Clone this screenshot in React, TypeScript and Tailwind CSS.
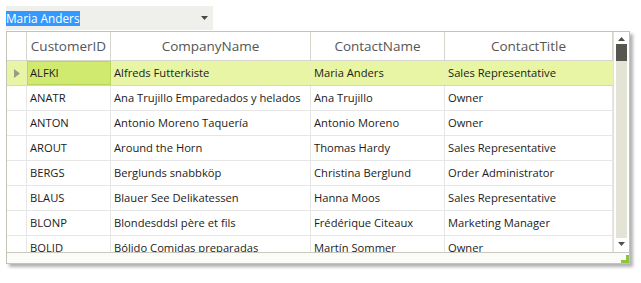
import React from 'react';

type Customer = {
    id: string;
    company: string;
    contact: string;
    title: string;
};

const customers: Customer[] = [
    { id: 'ALFKI', company: 'Alfreds Futterkiste', contact: 'Maria Anders', title: 'Sales Representative' },
    { id: 'ANATR', company: 'Ana Trujillo Emparedados y helados', contact: 'Ana Trujillo', title: 'Owner' },
    { id: 'ANTON', company: 'Antonio Moreno Taquería', contact: 'Antonio Moreno', title: 'Owner' },
    { id: 'AROUT', company: 'Around the Horn', contact: 'Thomas Hardy', title: 'Sales Representative' },
    { id: 'BERGS', company: 'Berglunds snabbköp', contact: 'Christina Berglund', title: 'Order Administrator' },
    { id: 'BLAUS', company: 'Blauer See Delikatessen', contact: 'Hanna Moos', title: 'Sales Representative' },
    { id: 'BLONP', company: 'Blondesddsl père et fils', contact: 'Frédérique Citeaux', title: 'Marketing Manager' },
    { id: 'BOLID', company: 'Bólido Comidas preparadas', contact: 'Martín Sommer', title: 'Owner' },
];

const font = "font-['Segoe_UI','Open_Sans','Noto_Sans',sans-serif]";

function HeaderCell({ children, className }: { children?: React.ReactNode; className: string }) {
    return (
        <div
            className={`flex h-full shrink-0 items-center justify-center border-r border-[#d6d6cc] text-[13.5px] text-[#555555] ${className}`}
        >
            {children}
        </div>
    );
}

function Row({ c, selected }: { c: Customer; selected: boolean }) {
    const cell = 'flex h-full shrink-0 items-center overflow-hidden whitespace-nowrap border-r px-[3px]';
    const line = selected ? 'border-[#e8f0b8]' : 'border-[#e6e6e6]';
    return (
        <div
            className={`flex h-[25px] shrink-0 border-b text-[11.2px] text-[#1c1c1c] ${
                selected ? 'border-[#d2e86c] bg-[#e7f5a4]' : 'border-[#e6e6e6] bg-white'
            }`}
        >
            <div className={`flex h-full w-[20px] shrink-0 items-center justify-center border-r ${line}`}>
                {selected && (
                    <svg width="6" height="9" viewBox="0 0 6 9">
                        <path d="M0 0 L6 4.5 L0 9 Z" fill="#9a9a8c" />
                    </svg>
                )}
            </div>
            <div
                className={`${cell} w-[84px] ${
                    selected ? 'border-[#b7d64a] bg-[#d0ea70] outline outline-1 -outline-offset-1 outline-[#b9d85a]' : line
                }`}
            >
                {c.id}
            </div>
            <div className={`${cell} w-[200px] ${line}`}>{c.company}</div>
            <div className={`${cell} w-[134px] ${line}`}>{c.contact}</div>
            <div className={`${cell} w-[168px] ${line}`}>{c.title}</div>
        </div>
    );
}

export default function App() {
    return (
        <div className={`h-[283px] w-[641px] overflow-hidden bg-white ${font}`}>
            {/* Combo */}
            <div className="ml-[6px] mt-[6px] flex h-[24px] w-[207px] items-center justify-between bg-[#efefeb] pr-[5px]">
                <span className="bg-[#3399ff] text-[11.8px] leading-[15px] text-white">Maria Anders</span>
                <svg width="7" height="4" viewBox="0 0 7 4">
                    <path d="M0 0 H7 L3.5 4 Z" fill="#4a4a44" />
                </svg>
            </div>

            {/* Grid */}
            <div className="ml-[6px] mt-px flex h-[233px] w-[624px] flex-col border border-[#c4c4b6] shadow-[3px_3px_3px_rgba(0,0,0,0.3)]">
                <div className="flex min-h-0 flex-1">
                    <div className="flex min-w-0 flex-1 flex-col overflow-hidden">
                        <div className="flex h-[29px] shrink-0 border-b border-[#d6d6cc]">
                            <HeaderCell className="w-[20px]" />
                            <HeaderCell className="w-[84px]">CustomerID</HeaderCell>
                            <HeaderCell className="w-[200px]">CompanyName</HeaderCell>
                            <HeaderCell className="w-[134px]">ContactName</HeaderCell>
                            <HeaderCell className="w-[168px]">ContactTitle</HeaderCell>
                        </div>
                        {customers.map((c, i) => (
                            <Row key={c.id} c={c} selected={i === 0} />
                        ))}
                    </div>

                    {/* Vertical scrollbar */}
                    <div className="flex w-[16px] shrink-0 flex-col items-center border-l border-[#e0e0d8] bg-white py-[2px]">
                        <div className="flex h-[9px] items-center">
                            <svg width="7" height="4" viewBox="0 0 7 4">
                                <path d="M0 4 H7 L3.5 0 Z" fill="#505048" />
                            </svg>
                        </div>
                        <div className="mt-[1px] flex w-[11px] flex-1 flex-col bg-[#e3e3d6]">
                            <div className="h-[17px] bg-[#57574f]" />
                        </div>
                        <div className="flex h-[12px] items-center">
                            <svg width="7" height="4" viewBox="0 0 7 4">
                                <path d="M0 0 H7 L3.5 4 Z" fill="#505048" />
                            </svg>
                        </div>
                    </div>
                </div>

                {/* Bottom strip */}
                <div className="relative h-[11px] shrink-0 border-t border-[#c8c8bc] bg-[#fbfbf9]">
                    <svg className="absolute bottom-0 right-0" width="8" height="8" viewBox="0 0 8 8">
                        <path d="M5 0 H8 V8 H0 V5 H5 Z" fill="#8cc63f" />
                    </svg>
                </div>
            </div>
        </div>
    );
}
